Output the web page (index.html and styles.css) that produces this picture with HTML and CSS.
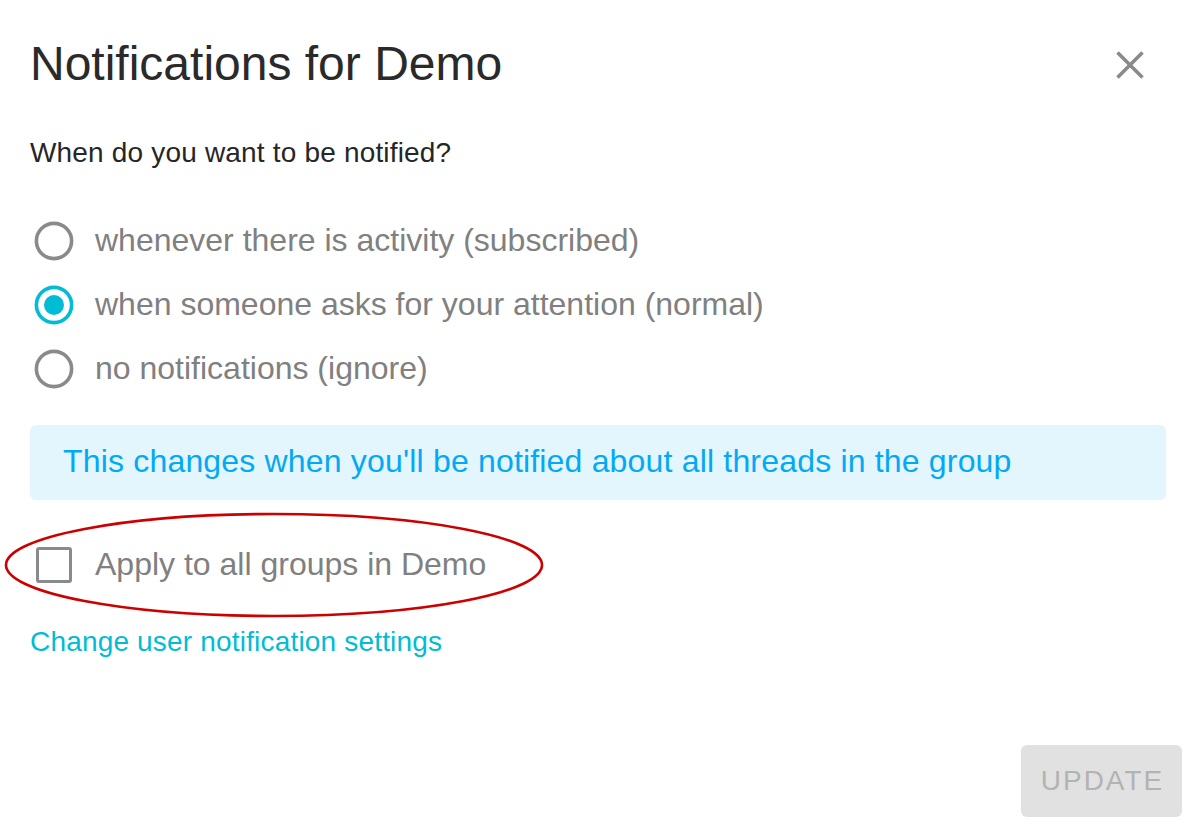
FILE: index.html
```html
<!DOCTYPE html>
<html>
<head>
<meta charset="utf-8">
<link rel="stylesheet" href="styles.css">
</head>
<body>
<div class="dialog">
  <div class="header">
    <h1 class="title">Notifications for Demo</h1>
    <svg class="close" width="28" height="28" viewBox="0 0 28 28"><path d="M1.5 1.5 L26.5 26.5 M26.5 1.5 L1.5 26.5" stroke="#8a8a8a" stroke-width="3.6" fill="none"/></svg>
  </div>
  <p class="question">When do you want to be notified?</p>
  <div class="radios">
    <div class="radio-row">
      <svg class="radio" width="40" height="40" viewBox="0 0 40 40"><circle cx="20" cy="20" r="17.6" fill="none" stroke="#8a8a8a" stroke-width="3.6"/></svg>
      <span class="label">whenever there is activity (subscribed)</span>
    </div>
    <div class="radio-row">
      <svg class="radio" width="40" height="40" viewBox="0 0 40 40"><circle cx="20" cy="20" r="17.6" fill="none" stroke="#00bcd4" stroke-width="3.6"/><circle cx="20" cy="20" r="10" fill="#00bcd4"/></svg>
      <span class="label">when someone asks for your attention (normal)</span>
    </div>
    <div class="radio-row">
      <svg class="radio" width="40" height="40" viewBox="0 0 40 40"><circle cx="20" cy="20" r="17.6" fill="none" stroke="#8a8a8a" stroke-width="3.6"/></svg>
      <span class="label">no notifications (ignore)</span>
    </div>
  </div>
  <div class="info">This changes when you'll be notified about all threads in the group</div>
  <div class="check-row">
    <span class="checkbox"></span>
    <span class="label">Apply to all groups in Demo</span>
    <svg class="highlight" width="548" height="110" viewBox="0 0 548 110"><ellipse cx="274" cy="55" rx="268" ry="51" fill="none" stroke="#cc0000" stroke-width="2.6"/></svg>
  </div>
  <a class="link">Change user notification settings</a>
  <div class="footer">
    <button class="update">UPDATE</button>
  </div>
</div>
</body>
</html>
```
FILE: styles.css
```css
html, body {
  margin: 0;
  padding: 0;
  background: #ffffff;
}
body {
  font-family: "Liberation Sans", Arial, sans-serif;
}
.dialog {
  box-sizing: border-box;
  height: 832px;
  padding: 36px 30px 15px 30px;
  display: flex;
  flex-direction: column;
}
.header {
  display: flex;
  align-items: center;
  justify-content: space-between;
  height: 56px;
}
.title {
  margin: 0;
  font-size: 48px;
  line-height: 56px;
  font-weight: normal;
  color: #2a2a2a;
}
.close {
  margin-right: 22px;
  margin-top: 2px;
}
.question {
  margin: 45px 0 0 0;
  font-size: 28px;
  line-height: 32px;
  letter-spacing: 0.18px;
  color: #262626;
}
.radios {
  margin-top: 40px;
  display: flex;
  flex-direction: column;
}
.radio-row {
  height: 64px;
  display: flex;
  align-items: center;
}
.radio {
  margin-left: 4px;
  margin-right: 21px;
  flex: none;
}
.label {
  font-size: 32px;
  line-height: 36px;
  color: #808080;
  margin-top: -2px;
}
.info {
  margin-top: 24px;
  height: 75px;
  box-sizing: border-box;
  padding: 17px 32px 20px 33px;
  font-size: 32px;
  line-height: 38px;
  letter-spacing: 0.18px;
  color: #03a9f4;
  background: #e3f6fd;
  border-radius: 6px;
}
.check-row {
  position: relative;
  margin-top: 33px;
  height: 64px;
  display: flex;
  align-items: center;
}
.checkbox {
  box-sizing: border-box;
  width: 36px;
  height: 36px;
  margin-left: 6px;
  margin-right: 23px;
  border: 3.6px solid #8a8a8a;
  border-radius: 3px;
  flex: none;
}
.highlight {
  position: absolute;
  left: -30px;
  top: -23px;
  pointer-events: none;
}
.link {
  display: block;
  margin-top: 29px;
  font-size: 28px;
  line-height: 32px;
  letter-spacing: 0.18px;
  color: #00bcd4;
  text-decoration: none;
}
.footer {
  margin-top: auto;
  margin-right: -16px;
  display: flex;
  justify-content: flex-end;
}
.update {
  width: 161px;
  height: 72px;
  border: none;
  border-radius: 6px;
  background: #e1e1e1;
  color: #b3b3b3;
  font-family: "Liberation Sans", Arial, sans-serif;
  font-size: 28px;
  letter-spacing: 2px;
  padding: 0 0 0 2px;
}
```
